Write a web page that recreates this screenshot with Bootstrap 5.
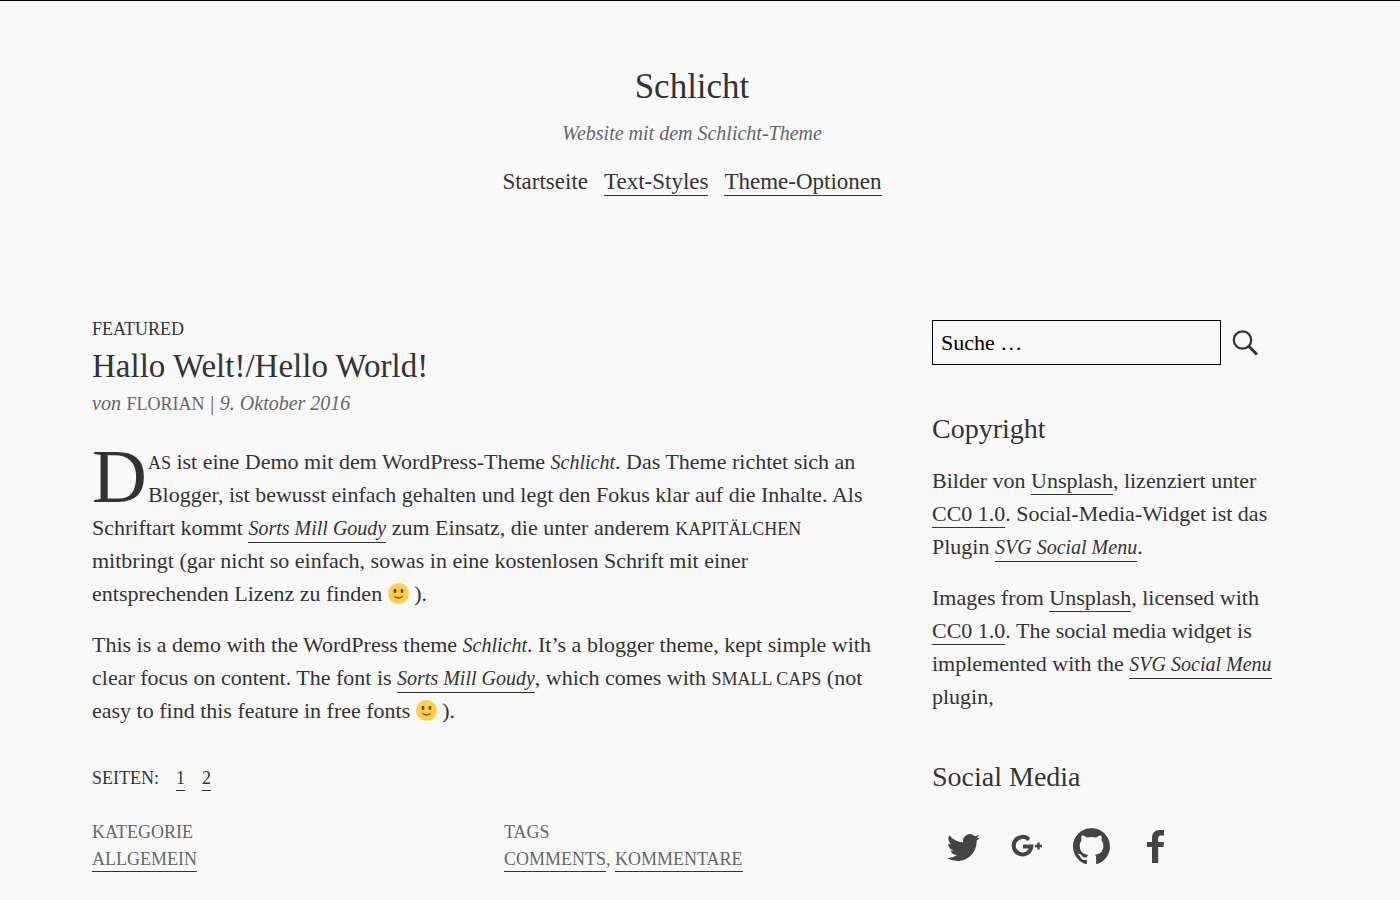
<!DOCTYPE html>
<html lang="de">
<head>
<meta charset="utf-8">
<meta name="viewport" content="width=device-width, initial-scale=1">
<title>Schlicht</title>
<link href="https://cdn.jsdelivr.net/npm/bootstrap@5.3.0/dist/css/bootstrap.min.css" rel="stylesheet">
<style>
  body { background: #f9f9f9; color: #333; font-family: "Liberation Serif", serif; font-size: 22px; line-height: 33px; border-top: 1px solid #000; padding-right: 16px; }
  a, a:hover { color: inherit; text-decoration: none; border-bottom: 1px solid #333; padding-bottom: 1px; }
  a.plain { border-bottom: 0; }
  em { font-size: 20px; line-height: 1; }
  a:has(em) { padding-bottom: 2px; }
  .wrap { max-width: 1200px; margin-inline: auto; }
  .muted { color: #666; }
  .title-lg { font-size: 35px; line-height: 42px; font-weight: 400; }
  .title-post { font-size: 33px; line-height: 40px; font-weight: 400; }
  .title-md { font-size: 28px; line-height: 34px; font-weight: 400; }
  .site-head { padding-top: 65px; margin-bottom: 122px; }
  .site-nav { font-size: 23px; }
  .caps { font-size: 18px; }
  span.caps { line-height: 1; }
  .caps a { padding-bottom: 2px; }
  .prose p { margin-bottom: 18px; }
  .post-body { margin-top: 26px; }
  .drop { float: left; font-size: 76px; line-height: 62px; padding-right: 1px; }
  .smile { width: 21px; height: 21px; vertical-align: -3px; }
  .pages { margin-top: 35px; gap: 17px; }
  .meta-row { line-height: 27px; }
  @media (min-width: 992px) {
    .main-col { width: 70%; padding-right: 52px; }
    .side-col { width: 30%; }
    .tags-col { margin-right: -36px; }
  }
  .search-box, .search-box:focus { width: 289px; height: 45px; border: 1px solid #000; border-radius: 0; background: transparent; color: #000; font-size: 22px; padding: 4px 8px; box-shadow: none; }
  .search-box::placeholder { color: #000; opacity: 1; }
  .search-go { border: 0; background: none; padding: 0; margin-left: 11px; line-height: 0; }
  .side-title { margin: 47px 0 18px; }
  .social { color: #444; padding-left: 7px; gap: 16px; margin-top: 28px; }
  .social a { display: flex; width: 48px; height: 48px; border: 0; padding: 0; align-items: center; justify-content: center; }
  .social svg { overflow: visible; }
</style>
</head>
<body>
<div class="wrap">
  <header class="site-head text-center">
    <h1 class="title-lg mb-0">Schlicht</h1>
    <p class="muted mt-2 mb-0"><em>Website mit dem Schlicht-Theme</em></p>
    <nav class="site-nav d-flex justify-content-center gap-3 mt-3">
      <span><a class="plain" href="#">Startseite</a></span>
      <span><a href="#">Text-Styles</a></span>
      <span><a href="#">Theme-Optionen</a></span>
    </nav>
  </header>

  <div class="row g-0">
    <main class="main-col">
      <article>
        <header>
          <div class="caps lh-1">FEATURED</div>
          <h2 class="title-post mb-0 mt-2">Hallo Welt!/Hello World!</h2>
          <p class="muted mb-0"><em>von</em> <span class="caps">FLORIAN</span> | <em>9. Oktober 2016</em></p>
        </header>
        <div class="prose post-body">
          <p><span class="drop">D</span><span class="caps">AS</span> ist eine Demo mit dem WordPress-Theme <em>Schlicht</em>. Das Theme richtet sich an Blogger, ist bewusst einfach gehalten und legt den Fokus klar auf die Inhalte. Als Schriftart kommt <a href="#"><em>Sorts Mill Goudy</em></a> zum Einsatz, die unter anderem <span class="caps">KAPITÄLCHEN</span> mitbringt (gar nicht so einfach, sowas in eine kostenlosen Schrift mit einer entsprechenden Lizenz zu finden <svg class="smile" viewBox="0 0 36 36" role="img" aria-label="Smiley"><circle cx="18" cy="18" r="18" fill="#FFCC4D"/><path d="M10.5 22.5c.2.7 2.300 4 7.500 4s7.300-3.300 7.500-4c.1-.4-.5-.8-.9-.4-.1.100-2.600 2.200-6.600 2.200s-6.500-2.100-6.600-2.200c-.4-.4-1 0-.9.400z" fill="#664500"/><ellipse cx="12" cy="13.500" rx="2.500" ry="3.500" fill="#664500"/><ellipse cx="24" cy="13.500" rx="2.500" ry="3.500" fill="#664500"/></svg> ).</p>
          <p>This is a demo with the WordPress theme <em>Schlicht</em>. It’s a blogger theme, kept simple with clear focus on content. The font is <a href="#"><em>Sorts Mill Goudy</em></a>, which comes with <span class="caps">SMALL CAPS</span> (not easy to find this feature in free fonts <svg class="smile" viewBox="0 0 36 36" role="img" aria-label="Smiley"><circle cx="18" cy="18" r="18" fill="#FFCC4D"/><path d="M10.5 22.5c.2.7 2.300 4 7.500 4s7.300-3.300 7.500-4c.1-.4-.5-.8-.9-.4-.1.100-2.600 2.200-6.600 2.200s-6.500-2.100-6.600-2.200c-.4-.4-1 0-.9.400z" fill="#664500"/><ellipse cx="12" cy="13.500" rx="2.500" ry="3.500" fill="#664500"/><ellipse cx="24" cy="13.500" rx="2.500" ry="3.500" fill="#664500"/></svg> ).</p>
        </div>
        <nav class="caps pages d-flex"><span>SEITEN:</span><span><a href="#">1</a></span><span><a href="#">2</a></span></nav>
        <footer class="row g-0 caps muted meta-row mt-4 tags-col">
          <div class="col-6">KATEGORIE<br><a href="#">ALLGEMEIN</a></div>
          <div class="col-6">TAGS<br><a href="#">COMMENTS</a>, <a href="#">KOMMENTARE</a></div>
        </footer>
      </article>
    </main>

    <aside class="side-col">
      <form class="d-flex align-items-center" role="search">
        <input class="form-control search-box" type="search" placeholder="Suche …" aria-label="Suche">
        <button class="search-go" type="submit" aria-label="Suche starten"><svg width="27" height="27" viewBox="0 0 27 27" fill="none" stroke="#333"><circle cx="10.500" cy="11" r="8.700" stroke-width="2.200"/><path d="M16.500 17l8.500 8.500" stroke-width="3"/></svg></button>
      </form>
      <section class="prose">
        <h2 class="title-md side-title">Copyright</h2>
        <p>Bilder von <a href="#">Unsplash</a>, lizenziert unter <a class="text-nowrap" href="#">CC0 1.0</a>. Social-Media-Widget ist das Plugin <a href="#"><em>SVG Social Menu</em></a>.</p>
        <p>Images from <a href="#">Unsplash</a>, licensed with <a class="text-nowrap" href="#">CC0 1.0</a>. The social media widget is implemented with the <a href="#"><em>SVG Social Menu</em></a> plugin,</p>
      </section>
      <section>
        <h2 class="title-md side-title">Social Media</h2>
        <div class="social d-flex">
          <a href="#" aria-label="Twitter"><svg width="33" height="33" viewBox="0 0 16 16" fill="currentColor"><path d="M5.026 15c6.038 0 9.341-5.003 9.341-9.334 0-.14 0-.282-.006-.422A6.685 6.685 0 0 0 16 3.542a6.658 6.658 0 0 1-1.889.518 3.301 3.301 0 0 0 1.447-1.817 6.533 6.533 0 0 1-2.087.793A3.286 3.286 0 0 0 7.875 6.030a9.325 9.325 0 0 1-6.767-3.429 3.289 3.289 0 0 0 1.018 4.382A3.323 3.323 0 0 1 .64 6.575v.045a3.288 3.288 0 0 0 2.632 3.218 3.203 3.203 0 0 1-.865.115 3.230 3.230 0 0 1-.614-.057 3.283 3.283 0 0 0 3.067 2.277A6.588 6.588 0 0 1 .78 13.580a6.320 6.320 0 0 1-.78-.045A9.344 9.344 0 0 0 5.026 15z"/></svg></a>
          <a href="#" aria-label="Google Plus"><svg width="30" height="22" viewBox="0 0 30 22" fill="none" stroke="currentColor"><path d="M17 4.700A8.800 8.800 0 1 0 19.300 11.500H11" stroke-width="4"/><path d="M26.500 7.500v7M23 11h7" stroke-width="2.400"/></svg></a>
          <a href="#" aria-label="GitHub"><svg width="37" height="37" viewBox="0 0 16 16" fill="currentColor"><path d="M8 0C3.580 0 0 3.580 0 8c0 3.540 2.290 6.530 5.470 7.590.4.070.55-.17.55-.38 0-.19-.01-.82-.01-1.490-2.010.37-2.530-.49-2.690-.94-.09-.23-.48-.94-.82-1.130-.28-.15-.68-.52-.01-.53.63-.01 1.080.58 1.230.82.72 1.210 1.870.87 2.330.66.07-.52.28-.87.51-1.070-1.780-.2-3.640-.89-3.640-3.950 0-.87.31-1.590.82-2.150-.08-.2-.36-1.020.08-2.120 0 0 .67-.21 2.200.82.64-.18 1.320-.27 2-.27s1.360.09 2 .27c1.530-1.040 2.200-.82 2.200-.82.44 1.100.16 1.920.08 2.120.51.56.82 1.270.82 2.150 0 3.070-1.870 3.750-3.650 3.950.29.25.54.73.54 1.480 0 1.070-.01 1.930-.01 2.200 0 .21.15.46.55.38A8.010 8.010 0 0 0 16 8c0-4.420-3.580-8-8-8z"/></svg></a>
          <a href="#" aria-label="Facebook"><svg width="17" height="33" viewBox="0 0 17 33" fill="currentColor"><path d="M5 33V17H0v-5h5V8c0-5 3-8 7.600-8H17v5.500h-3c-2 0-2.800.9-2.800 2.700V12H17l-.7 5h-5.100v16z"/></svg></a>
        </div>
      </section>
    </aside>
  </div>
</div>
<script src="https://cdn.jsdelivr.net/npm/bootstrap@5.3.0/dist/js/bootstrap.bundle.min.js"></script>
</body>
</html>
